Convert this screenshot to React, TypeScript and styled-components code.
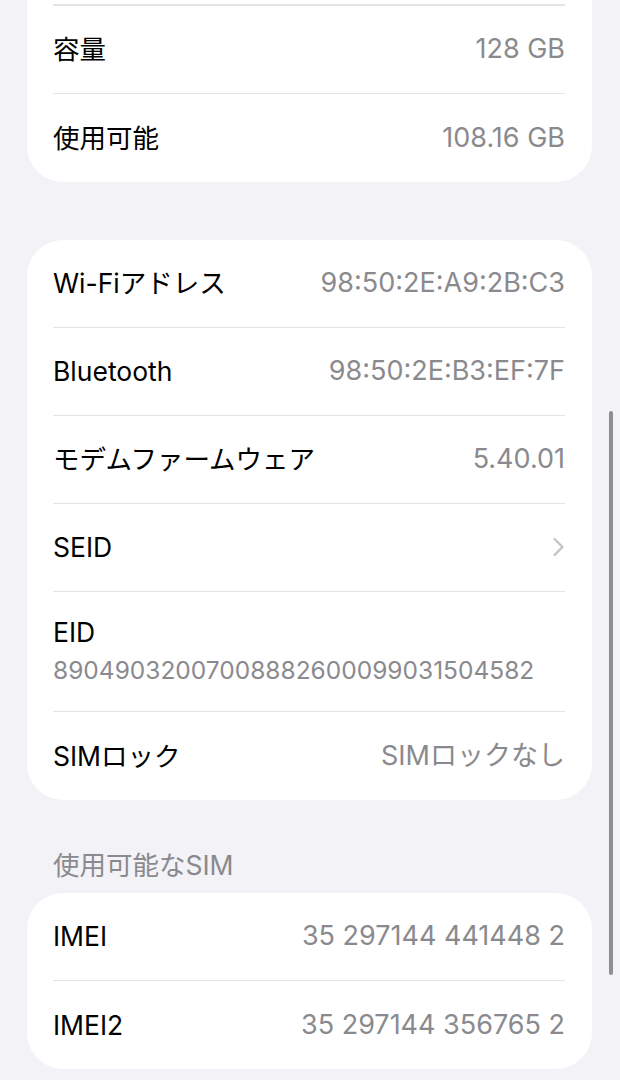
import React from 'react';
import styled, { createGlobalStyle } from 'styled-components';

interface Item {
  label: string;
  value?: string;
  chevron?: boolean;
  stacked?: boolean;
}

const storage: Item[] = [
  { label: '容量', value: '128 GB' },
  { label: '使用可能', value: '108.16 GB' },
];

const network: Item[] = [
  { label: 'Wi-Fiアドレス', value: '98:50:2E:A9:2B:C3' },
  { label: 'Bluetooth', value: '98:50:2E:B3:EF:7F' },
  { label: 'モデムファームウェア', value: '5.40.01' },
  { label: 'SEID', chevron: true },
  { label: 'EID', value: '89049032007008882600099031504582', stacked: true },
  { label: 'SIMロック', value: 'SIMロックなし' },
];

const sims: Item[] = [
  { label: 'IMEI', value: '35 297144 441448 2' },
  { label: 'IMEI2', value: '35 297144 356765 2' },
];

function Chevron() {
  return (
    <svg width="13" height="20" viewBox="0 0 13 20" fill="none">
      <polyline
        points="2.5,2 10.5,10 2.5,18"
        stroke="#c4c4c7"
        strokeWidth="2.4"
        strokeLinecap="round"
        strokeLinejoin="round"
      />
    </svg>
  );
}

// continued: the group is scrolled, its top lies above the screen
function Group({ items, continued }: { items: Item[]; continued?: boolean }) {
  return (
    <Card $continued={continued}>
      {continued && <TopRule />}
      {items.map((item) =>
        item.stacked ? (
          <StackedRow key={item.label}>
            <Label>{item.label}</Label>
            <SubValue>{item.value}</SubValue>
          </StackedRow>
        ) : (
          <Row key={item.label}>
            <Label>{item.label}</Label>
            {item.value && <Value>{item.value}</Value>}
            {item.chevron && <Chevron />}
          </Row>
        )
      )}
    </Card>
  );
}

export default function App() {
  return (
    <>
      <GlobalStyle />
      <Screen>
        <Content>
          <Group items={storage} continued />
          <Group items={network} />
          <SectionHeader>使用可能なSIM</SectionHeader>
          <Group items={sims} />
        </Content>
        <ScrollIndicator />
      </Screen>
    </>
  );
}

// Styles
const GlobalStyle = createGlobalStyle`
  html, body {
    margin: 0;
    padding: 0;
    background: #f2f2f7;
  }
  body {
    font-family: Inter, "Noto Sans CJK JP", sans-serif;
    -webkit-font-smoothing: antialiased;
  }
`;

const Screen = styled.div`
  position: relative;
  width: 620px;
  height: 1080px;
  overflow: hidden;
  background: #f2f2f7;
`;

const Content = styled.div`
  display: flex;
  flex-direction: column;
  padding: 0 28px 0 27px;
`;

const Card = styled.div<{ $continued?: boolean }>`
  display: flex;
  flex-direction: column;
  background: #ffffff;
  border-radius: ${(p) => (p.$continued ? '0 0 36px 36px' : '36px')};
  padding: 0 27px 0 26px;
  margin-top: ${(p) => (p.$continued ? '0' : '58px')};
`;

const TopRule = styled.div`
  height: 1.5px;
  margin-top: 4px;
  background: #e3e3e7;
`;

const Row = styled.div`
  display: flex;
  align-items: center;
  justify-content: space-between;
  height: 88px;
  box-sizing: border-box;
  border-bottom: 1.5px solid #e3e3e7;

  &:last-child {
    border-bottom: none;
  }
`;

const StackedRow = styled.div`
  display: flex;
  flex-direction: column;
  justify-content: center;
  gap: 8px;
  height: 120px;
  box-sizing: border-box;
  border-bottom: 1.5px solid #e3e3e7;
`;

const Label = styled.span`
  font-size: 26.5px;
  line-height: 30px;
  color: #000000;
  white-space: nowrap;
`;

const Value = styled.span`
  font-size: 27px;
  line-height: 30px;
  color: #8a8a8e;
  white-space: nowrap;
`;

const SubValue = styled(Value)`
  font-size: 24.5px;
`;

const SectionHeader = styled.div`
  font-size: 26.5px;
  line-height: 30px;
  color: #8a8a8e;
  padding: 50px 0 0 26px;
  margin-bottom: -45px;
`;

const ScrollIndicator = styled.div`
  position: absolute;
  right: 7px;
  top: 411px;
  width: 4px;
  height: 564px;
  border-radius: 2px;
  background: #8e8e93;
`;
